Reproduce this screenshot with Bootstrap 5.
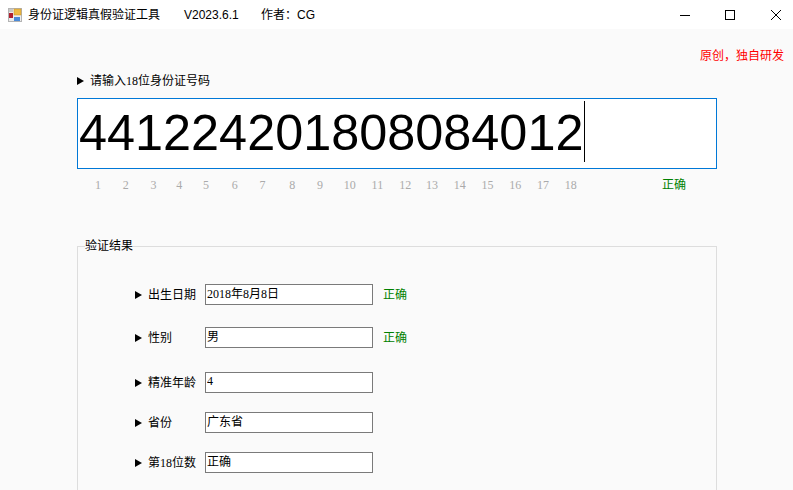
<!DOCTYPE html>
<html lang="en">
<head>
  <meta charset="UTF-8">
  <meta name="viewport" content="width=device-width, initial-scale=1.0">
  <title>身份证逻辑真假验证工具</title>
  <link href="https://cdn.jsdelivr.net/npm/bootstrap@5.3.0/dist/css/bootstrap.min.css" rel="stylesheet">
  <style>
    html, body { height: 100%; overflow: hidden; }
    body { background: #fafafa; color: #000; font-family: "Liberation Serif", "Noto Sans CJK SC", serif; font-size: 12px; line-height: 16px; }
    .title-bar { height: 29px; background: #fff; font-family: "Liberation Sans", "Noto Sans CJK SC", sans-serif; }
    .app-icon { margin-left: 8px; margin-right: 6px; }
    .app-name { width: 156px; }
    .app-ver { width: 77px; }
    .win-btns { gap: 35px; padding-right: 12px; }
    .win-close { margin-left: 1px; }
    .main-pane { padding: 0 76px 0 77px; }
    .note-red { color: #f00; text-align: right; margin: 19px -67px 0 0; height: 16px; }
    .tip-line { margin-top: 9px; height: 16px; }
    .arrow { width: 0; height: 0; border-left: 7px solid #000; border-top: 4px solid transparent; border-bottom: 4px solid transparent; margin-right: 6px; flex: none; }
    .id-box { height: 71px; border: 1px solid #0078d7; border-radius: 0; background: #fff; color: #000; margin-top: 9px; padding: 0 0 0 1px; font-family: "Liberation Sans", sans-serif; font-size: 50.4px; line-height: 68px; }
    .id-caret { display: inline-block; width: 1px; height: 61px; background: #000; vertical-align: top; margin-top: 2px; margin-left: 1px; }
    .digit-row { height: 16px; margin-top: 8px; padding-left: 7px; color: #aaa; }
    .digit-cell { width: 27.76px; text-align: center; flex: none; }
    .digit-cell:nth-child(3) { margin-right: -2px; }
    .digit-cell:nth-child(4) { margin-right: -1px; }
    .digit-cell:nth-child(6) { margin-left: 1px; }
    .digit-cell:nth-child(8) { margin-left: 2px; }
    .digit-cell:nth-child(10) { margin-left: 2px; }
    .digit-cell:nth-child(13) { margin-left: -1px; }
    .ok-text { color: #008000; }
    .digit-ok { margin-left: auto; margin-right: 31px; }
    .result-box { border: 1px solid #ddd; border-bottom: 0; margin: 45px 0 0; padding: 0; height: 252px; min-width: 0; }
    .result-box legend { float: none; width: auto; font-size: 12px; line-height: 16px; margin: 0 0 0 7px; padding: 0; }
    .field-row { height: 21px; padding-left: 57px; }
    .field-row label { width: 57px; flex: none; margin: 0; }
    .field-row .form-control { width: 168px; height: 21px; flex: none; border: 1px solid #7a7a7a; border-radius: 0; padding: 0 1px 3px; font-size: 12px; line-height: 16px; color: #000; background: #fff; box-shadow: none; }
    .field-row .ok-text { margin-left: 10px; }
    .row-a { margin-top: 30px; }
    .row-b { margin-top: 22px; }
    .row-c { margin-top: 24px; }
    .row-d { margin-top: 19px; }
  </style>
</head>
<body>
  <div class="title-bar d-flex align-items-center">
    <svg class="app-icon" width="14" height="14" viewBox="0 0 14 14">
      <rect x="0.5" y="0.5" width="13" height="13" fill="#ececec" stroke="#b4b4b4"/>
      <rect x="1" y="1" width="4" height="3" fill="#c8c8c8"/>
      <rect x="1" y="5" width="4" height="5" fill="#b02030"/>
      <rect x="6" y="1" width="7" height="6" fill="#eebb44" stroke="#c89020" stroke-width="0.5"/>
      <rect x="6" y="9" width="6" height="4" fill="#4a8ad8"/>
    </svg>
    <span class="app-name">身份证逻辑真假验证工具</span>
    <span class="app-ver">V2023.6.1</span>
    <span>作者：CG</span>
    <div class="win-btns ms-auto d-flex align-items-center">
      <svg width="10" height="10" viewBox="0 0 10 10"><path d="M0 5.5H10" stroke="#000" fill="none"/></svg>
      <svg width="10" height="10" viewBox="0 0 10 10"><rect x="0.5" y="0.5" width="9" height="9" stroke="#000" fill="none"/></svg>
      <svg class="win-close" width="10" height="10" viewBox="0 0 10 10"><path d="M0 0L10 10M10 0L0 10" stroke="#000" fill="none"/></svg>
    </div>
  </div>

  <div class="main-pane">
    <div class="note-red">原创，独自研发</div>
    <div class="tip-line d-flex align-items-center"><span class="arrow"></span>请输入18位身份证号码</div>
    <div class="id-box form-control">441224201808084012<span class="id-caret"></span></div>
    <div class="digit-row d-flex" id="digits">
      <span class="ok-text digit-ok">正确</span>
    </div>

    <fieldset class="result-box">
      <legend>验证结果</legend>
      <div class="field-row row-a d-flex align-items-center">
        <span class="arrow"></span><label>出生日期</label>
        <input class="form-control" value="2018年8月8日" readonly>
        <span class="ok-text">正确</span>
      </div>
      <div class="field-row row-b d-flex align-items-center">
        <span class="arrow"></span><label>性别</label>
        <input class="form-control" value="男" readonly>
        <span class="ok-text">正确</span>
      </div>
      <div class="field-row row-c d-flex align-items-center">
        <span class="arrow"></span><label>精准年龄</label>
        <input class="form-control" value="4" readonly>
      </div>
      <div class="field-row row-d d-flex align-items-center">
        <span class="arrow"></span><label>省份</label>
        <input class="form-control" value="广东省" readonly>
      </div>
      <div class="field-row row-d d-flex align-items-center">
        <span class="arrow"></span><label>第18位数</label>
        <input class="form-control" value="正确" readonly>
      </div>
    </fieldset>
  </div>

  <script src="https://cdn.jsdelivr.net/npm/bootstrap@5.3.0/dist/js/bootstrap.bundle.min.js"></script>
  <script>
    // position ruler under the id box
    const digits = document.getElementById('digits');
    const ok = digits.firstElementChild;
    for (let i = 1; i <= 18; i++) {
      const cell = document.createElement('span');
      cell.className = 'digit-cell';
      cell.textContent = i;
      digits.insertBefore(cell, ok);
    }
  </script>
</body>
</html>
